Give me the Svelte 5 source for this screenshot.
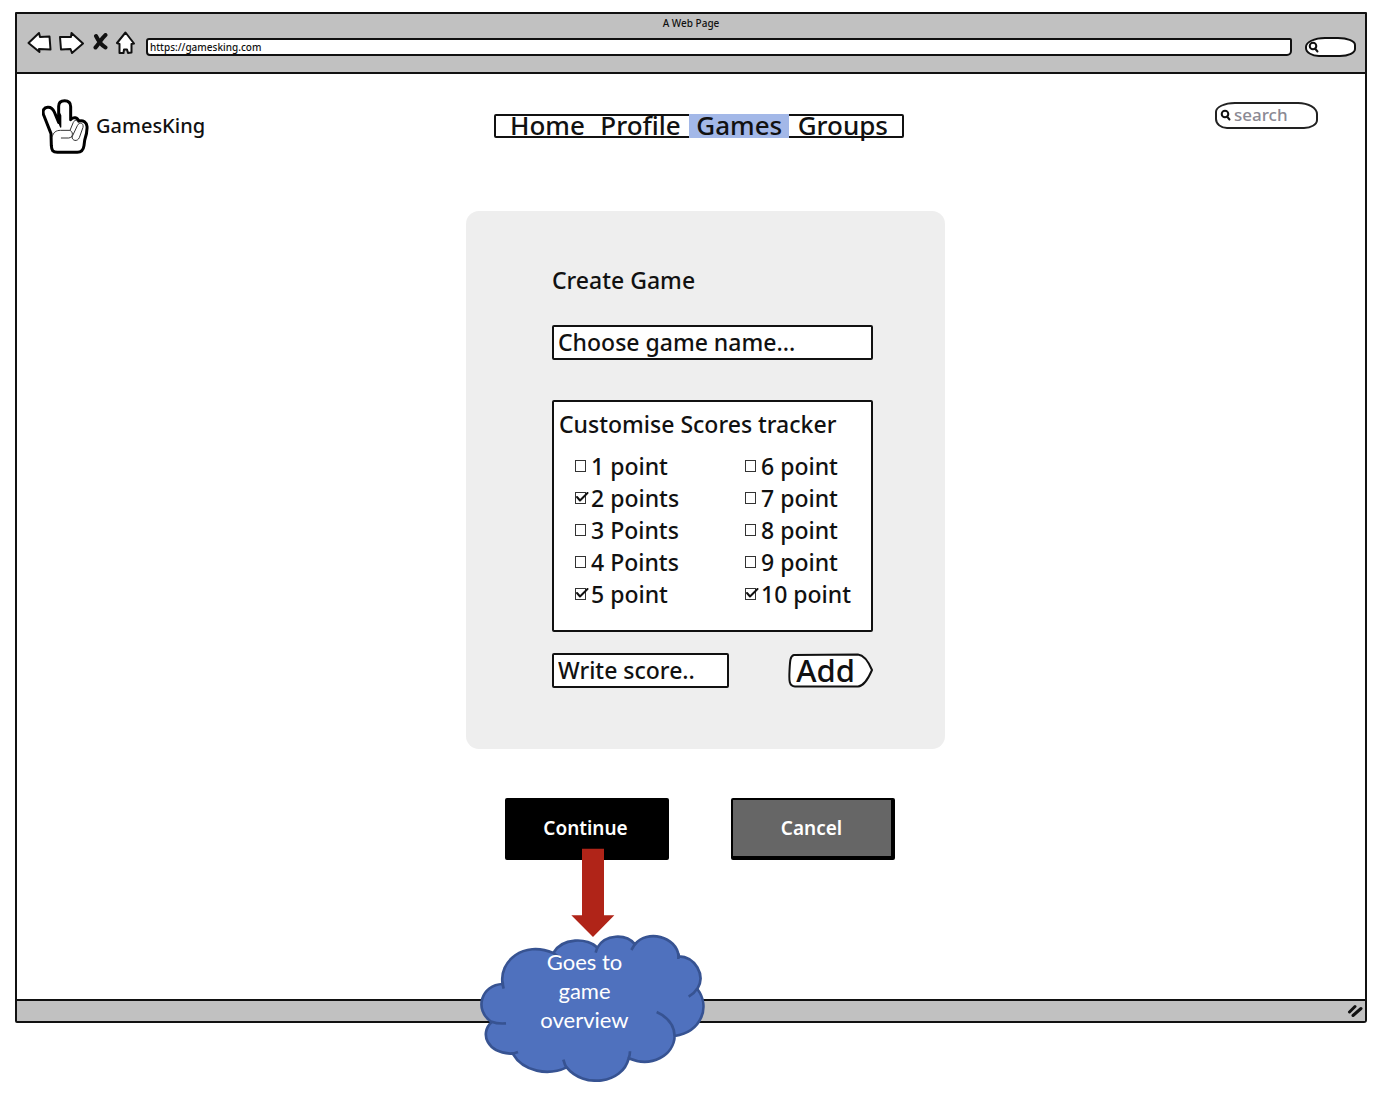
<script>
  const links = ['Home', 'Profile', 'Games', 'Groups'];
  const active = 'Games';

  let scores = $state([
    { label: '1 point', checked: false },
    { label: '2 points', checked: true },
    { label: '3 Points', checked: false },
    { label: '4 Points', checked: false },
    { label: '5 point', checked: true },
    { label: '6 point', checked: false },
    { label: '7 point', checked: false },
    { label: '8 point', checked: false },
    { label: '9 point', checked: false },
    { label: '10 point', checked: true }
  ]);
</script>

<div class="page">
  <div class="window">
    <div class="toolbar">
      <div class="title">A Web Page</div>
      <div class="controls">
        <button class="tool" aria-label="Back">
          <svg width="26" height="24" viewBox="0 0 26 24"><path d="M1.500 12 L12 2 L13 6 L22.500 5.500 L23.500 18.500 L12 18 L12.500 21 Z" /></svg>
        </button>
        <button class="tool" aria-label="Forward">
          <svg width="26" height="24" viewBox="0 0 26 24"><path d="M1 6 L12 6 L12.500 2 L24 12.500 L13 22 L11.500 18 L2 18.500 Z" /></svg>
        </button>
        <button class="tool stop" aria-label="Stop">
          <svg width="16" height="18" viewBox="0 0 16 18"><path class="cross" d="M4 3 C6 7 9 12 13.500 14.500 M13.500 2 C9 6 7 11 3.500 14.500" /></svg>
        </button>
        <button class="tool home" aria-label="Home page">
          <svg width="20" height="24" viewBox="0 0 20 24"><path d="M10.500 1.500 L2 12 L4.500 13 L4.500 22 L8.500 22 L9 18.500 L12 18.500 L13 22 L16.500 21.500 L16.500 13 L19 12.500 Z" /></svg>
        </button>
        <input class="address" type="text" aria-label="Address" value="https://gamesking.com" />
        <label class="find">
          <svg width="11" height="12" viewBox="0 0 11 12"><circle cx="5" cy="5" r="3.300" /><path d="M7 7.500 L9.500 10.500" /></svg>
          <input type="text" aria-label="Search the web" />
        </label>
      </div>
    </div>

    <header>
      <a class="brand" href="#home">
        <svg width="50" height="58" viewBox="12 12 150 174">
          <path class="hand" d="M39 116 L17 60 C12 45 19 38 29 37 C40 36 45 42 49 51 L62 82 L62 34 C62 21 70 17 80 17 C92 17 98 24 98 35 L98 74 C106 64 119 68 122 78 C136 74 146 82 147 94 C148 106 144 124 140 136 L138 152 C136 166 130 172 118 172 L58 172 C44 172 41 166 40 152 Z" />
          <path class="gap" d="M50 52 L62 76 L62 50 L68 62 L68 96 Z" />
          <path class="crease" d="M43 124 C46 112 54 106 68 106 L94 106 C107 108 106 128 92 129 L70 129 M96 106 L106 82 C110 73 119 76 121 82 M102 126 L118 92 C124 79 138 84 135 97 L124 128 C118 141 102 138 102 126" />
        </svg>
        <span>GamesKing</span>
      </a>
      <nav aria-label="Main">
        {#each links as link}
          <a href="#{link.toLowerCase()}" class:active={link === active}>{link}</a>
        {/each}
      </nav>
      <label class="search">
        <svg width="11" height="12" viewBox="0 0 11 12"><circle cx="5" cy="5" r="3.300" /><path d="M7 7.500 L9.500 10.500" /></svg>
        <input type="text" aria-label="Search" placeholder="search" />
      </label>
    </header>

    <main>
      <section class="card">
        <h1>Create Game</h1>
        <input class="field" type="text" aria-label="Game name" placeholder="Choose game name..." />
        <fieldset>
          <legend>Customise Scores tracker</legend>
          <div class="scores">
            {#each scores as score}
              <label>
                <span class="box">
                  <input type="checkbox" bind:checked={score.checked} />
                  {#if score.checked}
                    <svg width="14" height="12" viewBox="0 0 14 12"><path d="M2 5 L5 8.500 L12.500 1" /></svg>
                  {/if}
                </span>
                {score.label}
              </label>
            {/each}
          </div>
        </fieldset>
        <div class="add-row">
          <input class="field" type="text" aria-label="Score" placeholder="Write score.." />
          <button class="add">
            <svg viewBox="0 0 85 35" preserveAspectRatio="none"><path d="M6 2 L70 1.500 C76 2 81 10 84 17 C81 24 76 33 70 33.500 L7 33.500 C1 33 1 28 1.500 18 C2 8 2 3 6 2 Z" /></svg>
            <span>Add</span>
          </button>
        </div>
      </section>

      <div class="actions">
        <div class="step">
          <button class="primary">Continue</button>
          <div class="note">
            <svg width="226" height="234" viewBox="30 24 678 702">
              <path class="arrow" d="M336 26 H402 V226 H433 L369 291 L304 226 H336 Z" />
              <path class="cloud" d="M98 432 C86 365 160 300 250 339 C275 292 355 292 382 323 C405 282 468 280 495 313 C530 268 620 288 626 349 C675 350 708 405 682 447 C722 500 695 575 614 588 C612 645 545 685 476 655 C458 732 340 745 290 682 C235 708 160 696 128 641 C50 640 28 580 65 546 C10 510 34 434 98 432 Z" />
              <path class="fold" d="M98 425 Q98 436 101 446 M250 339 Q260 346 272 355 M382 322 L377 338 M495 312 L484 330 M626 340 L625 357 M682 445 Q673 460 656 470 M614 588 Q612 540 560 516 M476 655 Q480 645 480 634 M290 684 Q284 674 280 659 M122 641 Q132 641 144 636 M65 545 Q82 552 108 550" />
            </svg>
            <p>Goes to<br />game<br />overview</p>
          </div>
        </div>
        <button class="secondary">Cancel</button>
      </div>
    </main>

    <footer>
      <svg width="16" height="14" viewBox="0 0 16 14"><path d="M2.500 8 L8 2.500 M6 11.500 L14 4.500" /></svg>
    </footer>
  </div>
</div>

<style>
  :global(body) {
    margin: 0;
    background: #fff;
  }
  .page {
    padding: 12px 17px 72px 15px;
    font-family: 'Noto Sans', 'Open Sans', sans-serif;
    font-weight: 500;
    color: #111;
  }
  .page * {
    box-sizing: border-box;
  }
  input,
  button {
    font: inherit;
    color: inherit;
    margin: 0;
    padding: 0;
    min-width: 0;
    border: 0;
    background: none;
  }
  input {
    outline: none;
  }
  input::placeholder {
    color: inherit;
    opacity: 1;
  }
  button {
    cursor: pointer;
  }
  svg {
    display: block;
    flex: none;
    fill: none;
    stroke: #111;
    stroke-width: 2;
    stroke-linecap: round;
    stroke-linejoin: round;
  }
  .window {
    border: 2px solid #111;
    border-radius: 1px 1px 3px 2px;
    background: #fff;
  }
  .toolbar {
    height: 60px;
    border-bottom: 2px solid #111;
    background: #c1c1c1;
  }
  .title {
    padding-top: 2px;
    font-size: 10px;
    line-height: 14px;
    text-align: center;
  }
  .controls {
    display: flex;
    align-items: center;
    height: 26px;
    padding: 0 9px 0 10px;
  }
  .tool {
    margin-right: 6px;
  }
  .tool svg {
    fill: #fff;
  }
  .tool .cross {
    fill: none;
    stroke-width: 4;
  }
  .tool.stop {
    margin: 0 7px 2px 1px;
  }
  .tool.home {
    margin-right: 11px;
  }
  .address {
    flex: 1;
    height: 18px;
    margin-top: 7px;
    padding: 0 2px;
    border: 2px solid #111;
    border-radius: 3px 2px 5px 4px;
    background: #fff;
    font-size: 10px;
    line-height: 14px;
  }
  .find {
    display: flex;
    align-items: center;
    width: 51px;
    height: 20px;
    margin: 7px 0 0 13px;
    padding-left: 1px;
    border: 2px solid #111;
    border-radius: 20px 18px 16px 14px / 10px 8px 8px 9px;
    background: #fff;
  }
  .find input {
    width: 100%;
  }
  header {
    display: grid;
    grid-template-columns: 1fr auto 1fr;
    align-items: start;
    padding: 25px 9px 0 25px;
  }
  .brand {
    display: flex;
    align-items: center;
    gap: 4px;
    color: inherit;
    font-size: 20px;
    line-height: 28px;
    text-decoration: none;
  }
  .brand span {
    margin-top: -4px;
  }
  .hand {
    fill: #fff;
    stroke: #000;
    stroke-width: 9;
  }
  .gap {
    fill: #000;
    stroke: #000;
    stroke-width: 4;
  }
  .crease {
    stroke: #333;
    stroke-width: 3;
  }
  nav {
    display: flex;
    justify-content: space-between;
    width: 410px;
    height: 24px;
    margin-top: 15px;
    padding: 0 7px;
    border: 2px solid #111;
    border-radius: 2px;
    font-size: 26px;
    line-height: 20px;
  }
  nav a {
    margin: -2px 0;
    padding: 1px 7px 3px;
    color: inherit;
    text-decoration: none;
  }
  nav .active {
    background: #a3b8e8;
  }
  .search {
    display: flex;
    justify-self: end;
    align-items: center;
    gap: 3px;
    width: 103px;
    height: 27px;
    margin: 3px 38px 0 0;
    padding: 0 0 2px 3px;
    border: 2px solid #222;
    border-radius: 20px 20px 14px 12px / 10px 12px 9px 10px;
    color: #8b8993;
    font-size: 17px;
    line-height: 22px;
  }
  .search input {
    width: 100%;
  }
  main {
    display: flex;
    flex-direction: column;
    align-items: center;
    padding: 54px 0 139px 17px;
  }
  .card {
    width: 479px;
    margin-left: 12px;
    padding: 53px 72px 61px 86px;
    border-radius: 13px;
    background: #eee;
    font-size: 23px;
    line-height: 32px;
  }
  h1 {
    margin: 0 0 29px;
    font: inherit;
  }
  .field {
    display: block;
    width: 100%;
    height: 35px;
    padding: 0 4px 2px;
    border: 2px solid #111;
    border-radius: 2px;
    background: #fff;
  }
  fieldset {
    min-width: 0;
    height: 232px;
    margin: 40px 0 21px;
    padding: 6px 5px 0;
    border: 2px solid #111;
    border-radius: 2px;
    background: #fff;
  }
  legend {
    float: left;
    width: 100%;
    padding: 0;
  }
  .scores {
    display: grid;
    grid-template-rows: repeat(5, 32px);
    grid-template-columns: 170px 1fr;
    grid-auto-flow: column;
    padding: 10px 0 0 16px;
    clear: both;
    white-space: nowrap;
  }
  .scores label {
    display: flex;
    align-items: center;
    gap: 5px;
  }
  .box {
    position: relative;
    width: 11px;
    height: 12px;
  }
  .box input {
    display: block;
    width: 11px;
    height: 12px;
    border: 1px solid #333;
    appearance: none;
  }
  .box svg {
    position: absolute;
    top: 0;
    left: 0;
    pointer-events: none;
  }
  .add-row {
    display: flex;
    justify-content: space-between;
  }
  .add-row .field {
    width: 177px;
  }
  .add {
    position: relative;
    width: 85px;
    height: 35px;
    padding-right: 10px;
    font-size: 31px;
    line-height: 33px;
  }
  .add svg {
    position: absolute;
    inset: 0;
    width: 100%;
    height: 100%;
    fill: #fff;
  }
  .add span {
    position: relative;
  }
  .actions {
    display: flex;
    gap: 62px;
    margin-top: 49px;
    color: #fff;
    font-size: 19px;
    font-weight: 600;
  }
  .step {
    position: relative;
  }
  .primary,
  .secondary {
    width: 164px;
    height: 62px;
    border: 2px solid #000;
    border-width: 2px 4px 4px 2px;
    border-radius: 2px;
  }
  .primary {
    background: #000;
  }
  .secondary {
    background: #666;
  }
  .note {
    position: absolute;
    top: 50px;
    left: -25px;
  }
  .note svg {
    stroke-width: 8;
    stroke-linecap: butt;
  }
  .arrow {
    fill: #b02418;
    stroke: none;
  }
  .cloud {
    fill: #4f71be;
    stroke: #375392;
  }
  .fold {
    stroke: #375392;
  }
  .note p {
    position: absolute;
    top: 99px;
    left: 0;
    width: 210px;
    margin: 0;
    font-family: Lato, sans-serif;
    font-size: 22px;
    font-weight: 400;
    line-height: 29px;
    text-align: center;
  }
  footer {
    display: flex;
    justify-content: flex-end;
    align-items: center;
    height: 22px;
    padding-right: 2px;
    border-top: 2px solid #111;
    background: #c1c1c1;
  }
  footer svg {
    stroke-width: 3;
  }
</style>
